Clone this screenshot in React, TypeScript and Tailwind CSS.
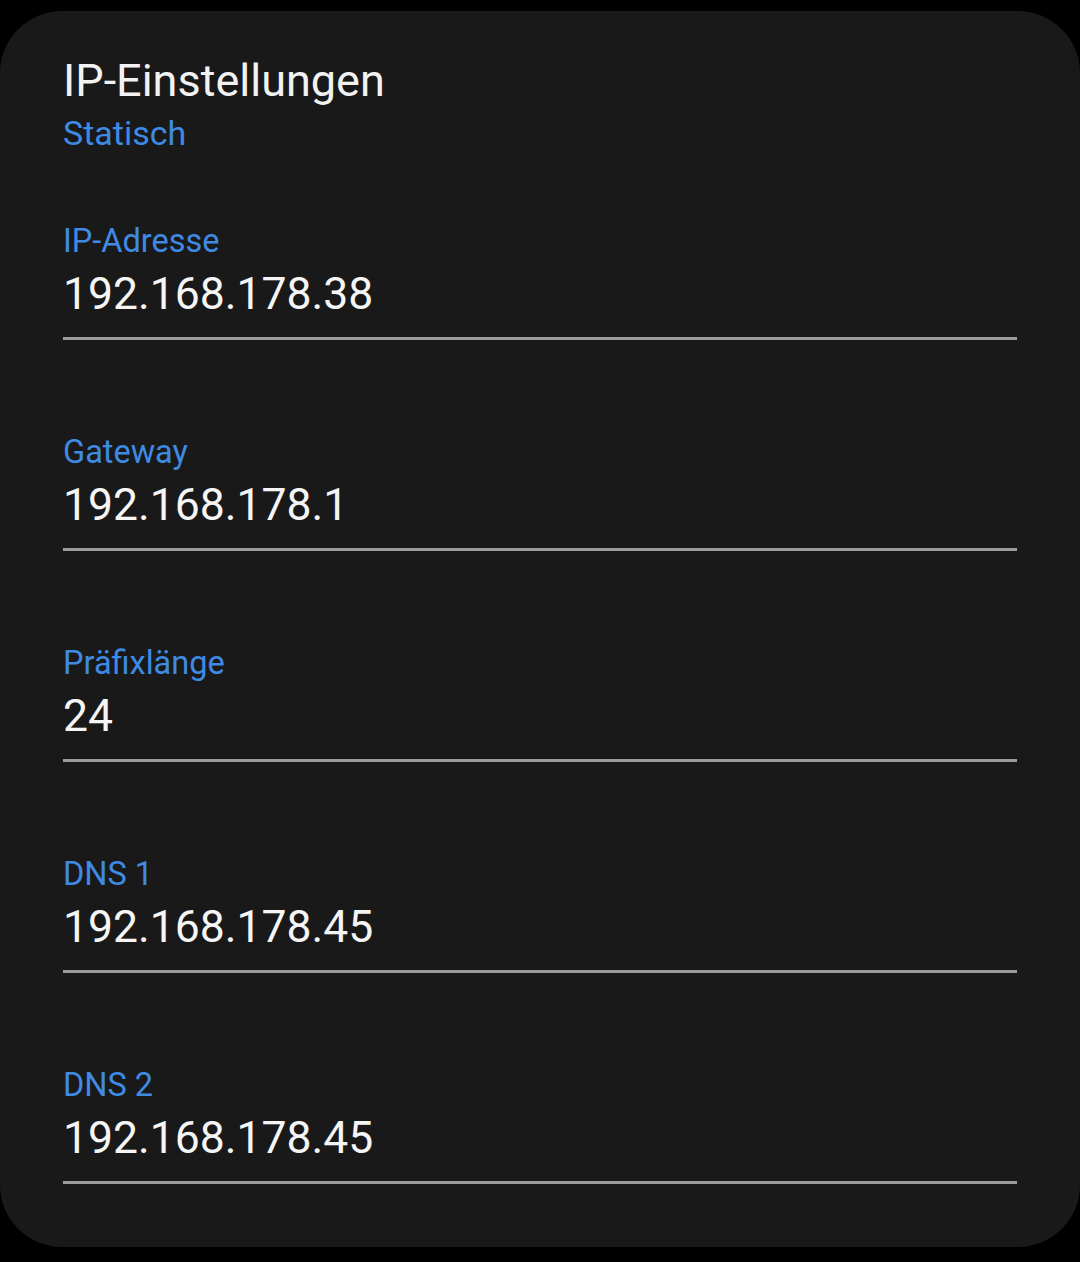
const fields = [
  { label: "IP-Adresse", value: "192.168.178.38" },
  { label: "Gateway", value: "192.168.178.1" },
  { label: "Präfixlänge", value: "24" },
  { label: "DNS 1", value: "192.168.178.45" },
  { label: "DNS 2", value: "192.168.178.45" },
];

export default function App() {
  return (
    <div className="min-h-[1262px] w-[1080px] bg-black pt-[11px] font-['Roboto',sans-serif]">
      <div className="h-[1236px] rounded-[62px] bg-[#191919] px-[63px] pt-[42px]">
        {/* header */}
        <h1 className="h-[56px] text-[45px] leading-[56px] text-[#f2f2f2]">IP-Einstellungen</h1>
        <p className="mt-[2px] h-[44px] text-[34px] leading-[44px] text-[#3f8ae3]">Statisch</p>
        {/* fields */}
        <div className="mt-[66px] flex flex-col gap-[92px]">
          {fields.map((f) => (
            <div key={f.label} className="flex flex-col">
              <span className="h-[40px] text-[32.5px] leading-[40px] text-[#3f8ae3]">{f.label}</span>
              <span className="mt-[5px] h-[56px] text-[44.5px] leading-[56px] text-[#f5f5f5]">{f.value}</span>
              <div className="mt-[15px] h-[3px] bg-[#9b9b9b]"></div>
            </div>
          ))}
        </div>
      </div>
    </div>
  );
}
